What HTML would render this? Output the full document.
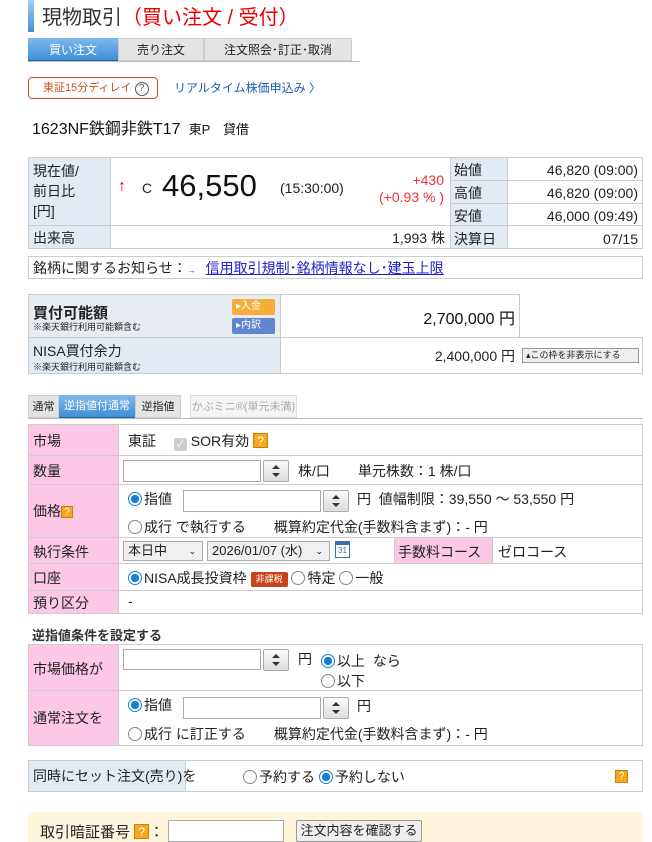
<!DOCTYPE html>
<html><head><meta charset="utf-8"><style>
*{box-sizing:border-box;margin:0;padding:0}
body{width:652px;height:834px;overflow:hidden;background:#fff;font-family:"Liberation Sans","Noto Sans CJK JP",sans-serif;color:#222;position:relative;font-size:14px}
.a{position:absolute;white-space:nowrap}
.box{position:absolute;border:1px solid #ccc}
.pk{background:#fcc8e6}
.bl{background:#e2ebf4}
.inp{position:absolute;height:22px;border:1px solid #aaa;background:#fff}
.spin{position:absolute;width:26px;height:22px;border:1px solid #aaa;border-radius:2px;background:linear-gradient(#fafafa,#ddd)}
.spin:before{content:"";position:absolute;left:8px;top:4px;border:4px solid transparent;border-top:0;border-bottom:4px solid #333}
.spin:after{content:"";position:absolute;left:8px;top:12px;border:4px solid transparent;border-bottom:0;border-top:4px solid #333}
.rad{display:inline-block;width:14px;height:14px;border:1px solid #888;border-radius:50%;vertical-align:-2px;margin-right:2px;background:#fff}
.rad.on{border-color:#1a7fd4;background:radial-gradient(#1a7fd4 45%,#fff 52%)}
.q{display:inline-block;width:15px;height:15px;background:#f5a623;color:#fff;font-size:12px;text-align:center;line-height:15px;border:1px solid #d08000;vertical-align:1px}
.hl{position:absolute;height:1px;background:#ccc}
.vl{position:absolute;width:1px;background:#ccc}
.sel{position:absolute;height:20px;border:1px solid #aaa;background:#f0f0f0;font-size:13px;padding-left:4px;line-height:18px}
</style></head><body>
<div class="a" style="left:28px;top:0;width:6px;height:32px;background:linear-gradient(#a8cdee,#3d8fd6)"></div>
<div class="a" style="left:42px;top:1px;font-size:20px;color:#333">現物取引<span style="color:#e00">（買い注文 / 受付）</span></div>
<div class="a" style="left:28px;top:38px;width:90px;height:24px;background:linear-gradient(#7fb8ec,#3f8fd8);color:#fff;font-size:12px;text-align:center;line-height:24px;border-bottom:2px solid #1d5fa8">買い注文</div>
<div class="a" style="left:118px;top:38px;width:86px;height:23px;background:#e4e4e4;border:1px solid #ccc;font-size:12px;text-align:center;line-height:22px">売り注文</div>
<div class="a" style="left:204px;top:38px;width:148px;height:23px;background:#e4e4e4;border:1px solid #ccc;font-size:12px;text-align:center;line-height:22px">注文照会･訂正･取消</div>
<div class="hl" style="left:28px;top:61px;width:332px;background:#bbb"></div>
<div class="a" style="left:28px;top:77px;width:130px;height:22px;border:1px solid #c9531f;border-radius:4px;font-size:11px;color:#c9531f;line-height:20px;padding-left:14px">東証15分ディレイ <span style="display:inline-block;width:14px;height:14px;border:1px solid #555;border-radius:50%;color:#555;text-align:center;line-height:12px;font-size:10px">?</span></div>
<div class="a" style="left:174px;top:79px;font-size:12px;color:#1a5fb4">リアルタイム株価申込み 〉</div>
<div class="a" style="left:32px;top:115px;font-size:16px;color:#111">1623NF鉄鋼非鉄T17 <span style="font-size:13px">&nbsp;東P　貸借</span></div>

<div class="box" style="left:28px;top:157px;width:615px;height:92px"></div>
<div class="a bl" style="left:29px;top:158px;width:81px;height:67px"></div>
<div class="a bl" style="left:29px;top:226px;width:81px;height:22px"></div>
<div class="a bl" style="left:450px;top:158px;width:57px;height:90px"></div>
<div class="vl" style="left:110px;top:157px;height:92px"></div>
<div class="vl" style="left:450px;top:157px;height:92px"></div>
<div class="vl" style="left:507px;top:157px;height:92px"></div>
<div class="hl" style="left:28px;top:225px;width:615px"></div>
<div class="hl" style="left:450px;top:180px;width:193px"></div>
<div class="hl" style="left:450px;top:203px;width:193px"></div>
<div class="a" style="left:33px;top:161px;font-size:14px;line-height:20px">現在値/<br>前日比<br>[円]</div>
<div class="a" style="left:118px;top:178px;color:#e00;font-size:16px">↑</div>
<div class="a" style="left:142px;top:180px;font-size:14px">C</div>
<div class="a" style="left:162px;top:168px;font-size:31px;color:#111">46,550</div>
<div class="a" style="left:280px;top:180px;font-size:14px">(15:30:00)</div>
<div class="a" style="left:370px;top:172px;font-size:14px;color:#e33;text-align:right;width:74px;line-height:17px">+430<br>(+0.93 % )</div>
<div class="a" style="left:454px;top:159px;font-size:14px;line-height:23px">始値<br>高値<br>安値<br>決算日</div>
<div class="a" style="left:510px;top:159px;width:128px;text-align:right;font-size:14px;line-height:23px">46,820 (09:00)<br>46,820 (09:00)<br>46,000 (09:49)<br>07/15</div>
<div class="a" style="left:33px;top:228px">出来高</div>
<div class="a" style="left:300px;top:228px;width:145px;text-align:right">1,993 株</div>

<div class="box" style="left:28px;top:256px;width:615px;height:23px"></div>
<div class="a" style="left:33px;top:258px">銘柄に関するお知らせ：<span style="font-size:9px;color:#1a5fb4">→</span> <span style="color:#2222cc;text-decoration:underline;margin-left:6px">信用取引規制･銘柄情報なし･建玉上限</span></div>

<div class="box" style="left:28px;top:294px;width:492px;height:44px"></div>
<div class="a" style="left:29px;top:295px;width:251px;height:42px;background:#e6ecf1"></div>
<div class="box" style="left:28px;top:337px;width:615px;height:37px"></div>
<div class="a bl" style="left:29px;top:338px;width:251px;height:35px"></div>
<div class="vl" style="left:280px;top:294px;height:80px"></div>
<div class="a" style="left:33px;top:302px;font-size:15px;font-weight:bold">買付可能額</div>
<div class="a" style="left:33px;top:320px;font-size:9px">※楽天銀行利用可能額含む</div>
<div class="a" style="left:232px;top:299px;width:43px;height:16px;background:#f5ae3a;border-radius:2px;color:#fff;font-size:10px;line-height:16px;padding-left:4px">▸入金</div>
<div class="a" style="left:232px;top:318px;width:43px;height:16px;background:#5f86cf;border-radius:2px;color:#fff;font-size:10px;line-height:16px;padding-left:4px">▸内訳</div>
<div class="a" style="left:380px;top:305px;width:135px;text-align:right;font-size:16px;color:#111">2,700,000 円</div>
<div class="a" style="left:33px;top:341px;font-size:14px">NISA買付余力</div>
<div class="a" style="left:33px;top:360px;font-size:9px">※楽天銀行利用可能額含む</div>
<div class="a" style="left:380px;top:346px;width:135px;text-align:right;font-size:14px">2,400,000 円</div>
<div class="a" style="left:522px;top:348px;width:117px;height:15px;border:1px solid #999;background:#eee;font-size:9px;line-height:13px;padding-left:3px">▴この枠を非表示にする</div>

<div class="a" style="left:28px;top:395px;width:31px;height:23px;background:#e4e4e4;border:1px solid #ccc;font-size:11px;text-align:center;line-height:22px">通常</div>
<div class="a" style="left:59px;top:395px;width:76px;height:24px;background:linear-gradient(#7fb8ec,#3f8fd8);color:#fff;font-size:11px;text-align:center;line-height:22px;border-bottom:2px solid #1d5fa8">逆指値付通常</div>
<div class="a" style="left:135px;top:395px;width:46px;height:23px;background:#e4e4e4;border:1px solid #ccc;font-size:11px;text-align:center;line-height:22px">逆指値</div>
<div class="a" style="left:190px;top:395px;width:107px;height:23px;background:#f4f4f4;border:1px solid #ddd;font-size:11px;text-align:center;line-height:22px;color:#aaa">かぶミニ®(単元未満)</div>
<div class="hl" style="left:28px;top:418px;width:615px;background:#bbb"></div>

<div class="box" style="left:28px;top:424px;width:615px;height:190px"></div>
<div class="a pk" style="left:29px;top:425px;width:89px;height:188px"></div>
<div class="a pk" style="left:394px;top:538px;width:98px;height:25px"></div>
<div class="vl" style="left:118px;top:424px;height:190px"></div>
<div class="hl" style="left:28px;top:455px;width:615px"></div>
<div class="hl" style="left:28px;top:484px;width:615px"></div>
<div class="hl" style="left:28px;top:537px;width:615px"></div>
<div class="hl" style="left:28px;top:563px;width:615px"></div>
<div class="hl" style="left:28px;top:590px;width:615px"></div>
<div class="vl" style="left:394px;top:537px;height:26px"></div>
<div class="vl" style="left:492px;top:537px;height:26px"></div>
<div class="a" style="left:33px;top:431px">市場</div>
<div class="a" style="left:33px;top:461px">数量</div>
<div class="a" style="left:33px;top:501px">価格<span class="q" style="width:12px;height:12px;font-size:10px;line-height:11px">?</span></div>
<div class="a" style="left:33px;top:542px">執行条件</div>
<div class="a" style="left:33px;top:568px">口座</div>
<div class="a" style="left:33px;top:593px">預り区分</div>
<div class="a" style="left:128px;top:431px">東証　 <span style="display:inline-block;width:13px;height:13px;background:#ccc;border-radius:2px;color:#fff;font-size:10px;text-align:center;line-height:13px;vertical-align:-1px">✓</span> SOR有効 <span class="q">?</span></div>
<div class="inp" style="left:123px;top:460px;width:138px"></div><div class="spin" style="left:263px;top:460px"></div>
<div class="a" style="left:298px;top:461px">株/口　　単元株数：1 株/口</div>
<div class="a" style="left:128px;top:489px"><span class="rad on"></span>指値</div>
<div class="inp" style="left:183px;top:490px;width:138px"></div><div class="spin" style="left:323px;top:490px"></div>
<div class="a" style="left:357px;top:489px">円&nbsp; 値幅制限：39,550 ～ 53,550 円</div>
<div class="a" style="left:128px;top:517px"><span class="rad"></span>成行 で執行する　　概算約定代金(手数料含まず)：- 円</div>
<div class="sel" style="left:123px;top:541px;width:80px">本日中<span style="position:absolute;right:6px;font-size:9px">⌄</span></div>
<div class="sel" style="left:207px;top:541px;width:123px">2026/01/07 (水)<span style="position:absolute;right:6px;font-size:9px">⌄</span></div>
<div class="a" style="left:335px;top:541px;width:15px;height:17px;border:1px solid #3a6fb0;border-top:4px solid #3a6fb0;font-size:8px;text-align:center;line-height:12px;color:#3a6fb0">31</div>
<div class="a" style="left:398px;top:542px">手数料コース</div>
<div class="a" style="left:498px;top:542px">ゼロコース</div>
<div class="a" style="left:128px;top:568px"><span class="rad on"></span>NISA成長投資枠 <span style="display:inline-block;background:#c8431a;color:#fff;font-size:9px;padding:0 5px;line-height:15px;border-radius:2px;vertical-align:1px">非課税</span> <span class="rad"></span>特定 <span class="rad"></span>一般</div>
<div class="a" style="left:128px;top:593px">-</div>

<div class="a" style="left:32px;top:625px;font-size:13px;font-weight:bold;color:#333">逆指値条件を設定する</div>
<div class="box" style="left:28px;top:644px;width:615px;height:102px"></div>
<div class="a pk" style="left:29px;top:645px;width:89px;height:100px"></div>
<div class="vl" style="left:118px;top:644px;height:102px"></div>
<div class="hl" style="left:28px;top:690px;width:615px"></div>
<div class="a" style="left:33px;top:659px">市場価格が</div>
<div class="a" style="left:33px;top:708px">通常注文を</div>
<div class="inp" style="left:123px;top:649px;width:138px;height:21px"></div><div class="spin" style="left:263px;top:649px"></div>
<div class="a" style="left:298px;top:649px">円</div>
<div class="a" style="left:321px;top:651px;line-height:20px"><span class="rad on"></span>以上&nbsp; なら<br><span class="rad"></span>以下</div>
<div class="a" style="left:128px;top:695px"><span class="rad on"></span>指値</div>
<div class="inp" style="left:183px;top:697px;width:138px"></div><div class="spin" style="left:323px;top:697px"></div>
<div class="a" style="left:357px;top:696px">円</div>
<div class="a" style="left:128px;top:724px"><span class="rad"></span>成行 に訂正する　　概算約定代金(手数料含まず)：- 円</div>

<div class="box" style="left:28px;top:760px;width:615px;height:32px"></div>
<div class="a bl" style="left:29px;top:761px;width:156px;height:30px"></div>
<div class="vl" style="left:185px;top:760px;height:32px"></div>
<div class="a" style="left:33px;top:766px">同時にセット注文(売り)を</div>
<div class="a" style="left:243px;top:767px"><span class="rad"></span>予約する <span class="rad on"></span>予約しない</div>
<div class="a" style="left:615px;top:767px"><span class="q" style="width:13px;height:13px;font-size:10px;line-height:12px">?</span></div>

<div class="a" style="left:28px;top:812px;width:615px;height:30px;background:#fdf6dc"></div>
<div class="a" style="left:40px;top:821px;font-size:15px">取引暗証番号 <span class="q">?</span>：</div>
<div class="inp" style="left:168px;top:820px;width:116px"></div>
<div class="a" style="left:296px;top:820px;width:126px;height:22px;border:1px solid #999;border-radius:2px;background:#eee;font-size:13px;text-align:center;line-height:20px">注文内容を確認する</div>
</body></html>
